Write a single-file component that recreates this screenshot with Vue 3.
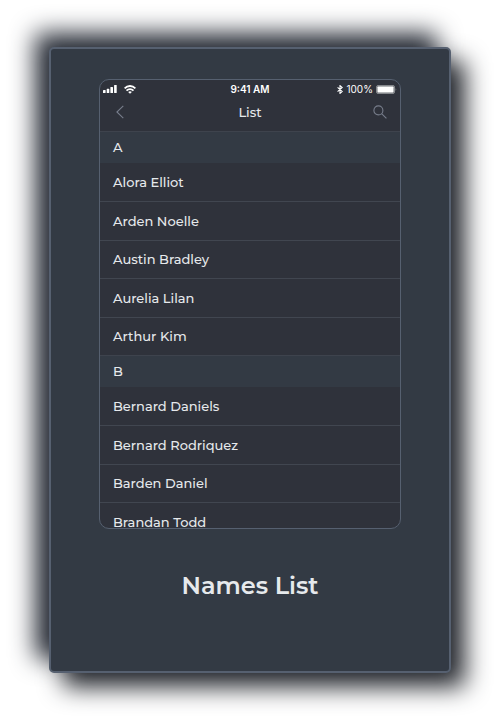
<script setup>
const groups = [
  { letter: 'A', names: ['Alora Elliot', 'Arden Noelle', 'Austin Bradley', 'Aurelia Lilan', 'Arthur Kim'] },
  { letter: 'B', names: ['Bernard Daniels', 'Bernard Rodriquez', 'Barden Daniel', 'Brandan Todd'] },
]
</script>

<template>
  <main class="card">
    <section class="phone">
      <div class="status">
        <div class="signals">
          <svg width="14" height="8" viewBox="0 0 14 8" fill="#fff" aria-hidden="true">
            <rect x="0" y="5" width="2.6" height="3" rx=".6" />
            <rect x="3.7" y="3.8" width="2.6" height="4.2" rx=".6" />
            <rect x="7.4" y="2" width="2.6" height="6" rx=".6" />
            <rect x="11.1" y="0" width="2.6" height="8" rx=".6" />
          </svg>
          <svg width="12" height="9" viewBox="0 0 12 9" fill="none" stroke="#fff" stroke-width="1.8" aria-hidden="true">
            <path d="M.6 3.3C3.6.2 8.4.2 11.4 3.3" />
            <path d="M2.5 5.6C4.5 3.7 7.5 3.7 9.5 5.6" />
            <path d="M6 8.8 4.1 6.9Q6 5.4 7.9 6.9Z" fill="#fff" stroke="none" />
          </svg>
        </div>
        <span class="time">9:41 AM</span>
        <div class="power">
          <svg width="6" height="9" viewBox="0 0 6 9" fill="none" stroke="#fff" stroke-width="1.1" aria-hidden="true">
            <path d="M.6 2.4 5.2 6.5 3 8.4V.6L5.2 2.5.6 6.6" />
          </svg>
          <span>100%</span>
          <svg width="21" height="9" viewBox="0 0 21 9" aria-hidden="true">
            <rect x=".5" y=".5" width="18" height="8" rx="1.5" fill="#6b6e73" stroke="#85888c" />
            <rect x="1.5" y="1.5" width="16" height="6" rx=".7" fill="#fff" />
            <path d="M19.6 3Q21 4.5 19.6 6Z" fill="#85888c" />
          </svg>
        </div>
      </div>
      <header class="bar">
        <button type="button" aria-label="Back">
          <svg width="8" height="14" viewBox="0 0 8 14" fill="none" stroke="#777d8b" stroke-width="1.1">
            <path d="M7.3.8.9 7l6.4 6.2" />
          </svg>
        </button>
        <h1>List</h1>
        <button type="button" aria-label="Search">
          <svg width="14" height="14" viewBox="0 0 14 14" fill="none" stroke="#777d8b" stroke-width="1.1">
            <circle cx="5.4" cy="5.4" r="4.5" />
            <path d="m8.6 8.6 4.8 4.8" />
          </svg>
        </button>
      </header>
      <div v-for="group in groups" :key="group.letter" class="group">
        <h2>{{ group.letter }}</h2>
        <ul>
          <li v-for="name in group.names" :key="name">{{ name }}</li>
        </ul>
      </div>
    </section>
    <p class="caption">Names List</p>
  </main>
</template>

<style>
body {
  background: #fff;
}
</style>

<style scoped>
.card {
  margin: 47px 49px;
  padding: 30px 48px 69px;
  border: 2px solid #566070;
  border-radius: 5px;
  background: #333a44;
  color: #e6e9ec;
  font-family: Montserrat, Inter, "Liberation Sans", sans-serif;
  box-shadow: 14px 14px 25px #24272d, -14px -14px 25px #292e38;
}

.phone {
  height: 448px;
  overflow: hidden;
  border: 1px solid #566070;
  border-radius: 10px;
  background: #2f323b;
}

.status {
  display: grid;
  grid-template-columns: 1fr auto 1fr;
  align-items: center;
  height: 18px;
  padding: 0 3px;
  font-family: Inter, "Liberation Sans", sans-serif;
  font-size: 10px;
  line-height: 12px;
  color: #fff;
}

.signals,
.power {
  display: flex;
  align-items: center;
  gap: 7px;
}

.power {
  justify-content: flex-end;
  gap: 3px;
}

.time {
  font-weight: 600;
}

.bar {
  display: flex;
  align-items: center;
  justify-content: space-between;
  height: 33px;
  padding: 0 12px;
}

button {
  display: flex;
  justify-content: center;
  width: 16px;
  padding: 0 0 6px;
  border: 0;
  background: none;
}

h1,
h2 {
  margin: 0;
  font-size: 13px;
  font-weight: 500;
}

h1 {
  padding-bottom: 6px;
  line-height: 20px;
}

.group {
  display: grid;
  grid-template-rows: 32px 1fr;
  height: 224px;
}

h2 {
  padding: 0 13px;
  border-top: 1px solid #3e434d;
  background: #333a44;
  line-height: 31px;
}

ul {
  display: grid;
  grid-template-rows: repeat(5, 1fr);
  margin: 0;
  padding: 0;
  list-style: none;
}

li {
  display: flex;
  align-items: center;
  padding: 0 13px;
  font-size: 13px;
  font-weight: 500;
  line-height: 20px;
}

li + li {
  border-top: 1px solid #414650;
}

.caption {
  margin: 41px 0 0;
  font-size: 24px;
  font-weight: 600;
  line-height: 32px;
  text-align: center;
}
</style>
